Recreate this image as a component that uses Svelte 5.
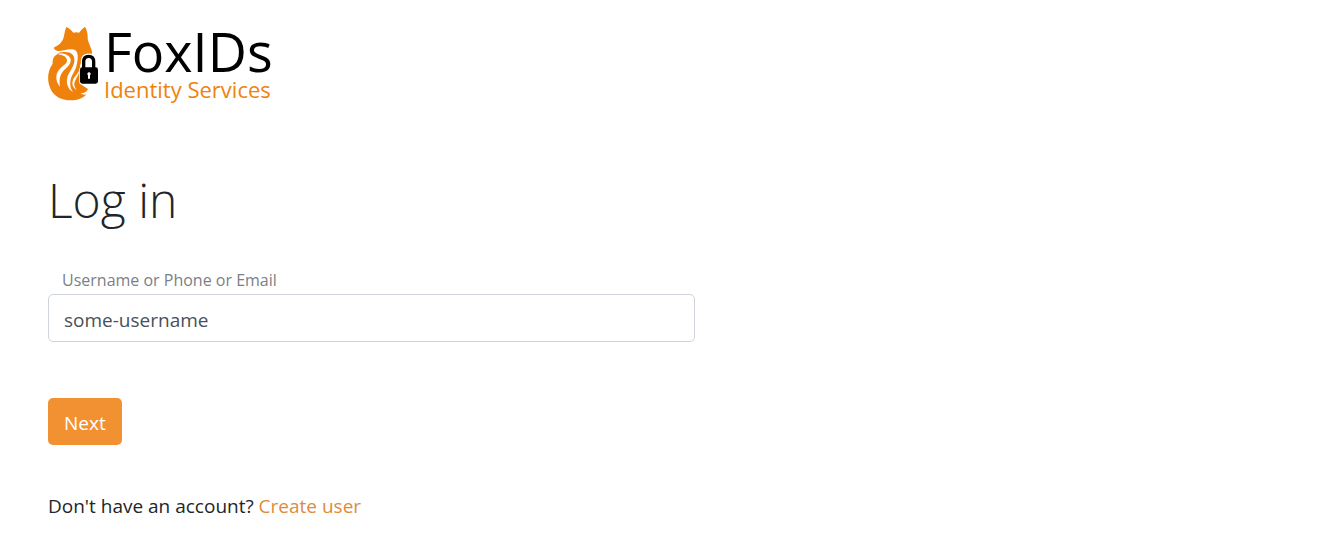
<script>
    let username = $state('some-username');

    function onSubmit(event) {
        event.preventDefault();
    }
</script>

<svelte:head>
    <title>Log in</title>
</svelte:head>

<div class="page">
    <header class="brand">
        <svg class="brand-icon" viewBox="24 18 156 228" aria-hidden="true">
            <!-- Head, chest and tail -->
            <path fill="#ef820d" d="M79 21 C87 25 95 31 100 38 Q109 35 117 38 C122 31 128 25 135 20 C141 30 144 44 143 57 C145 68 152 80 156 94 C158 102 150 108 138 112 L120 136 V191 L144 207 C140 216 132 221 122 219 C127 224 133 225 139 223 C129 235 112 241 94 241 C62 241 38 227 29 200 C20 174 25 148 38 131 C36 118 42 106 54 101 L62 94 C53 94 43 90 41 83 C50 79 59 73 64 66 C74 56 72 36 79 21 Z" />
            <!-- Fur lines -->
            <path fill="#fff" d="M38 93 C62 97 91 82 105 90 C118 99 113 122 110 135 C106 155 93 166 91 185 C90 200 93 208 99 216 C83 207 78 190 82 172 C86 157 101 141 103 125 C105 107 96 99 84 97 C68 94 56 96 38 104 Z" />
            <path fill="#fff" d="M56 101 C73 98 90 106 92 118 C93 130 87 137 77 146 C62 158 56 174 60 200 C47 185 45 164 57 149 C69 136 83 130 81 120 C79 109 68 104 56 104 Z" />
            <path fill="#fff" d="M119 148 C120 162 106 176 103 190 C102 198 105 204 111 210 C97 203 95 191 99 180 C103 169 114 163 119 148 Z" />
            <!-- Padlock -->
            <path fill="none" stroke="#fff" stroke-width="17" d="M131 143 V125 Q131 109 146 109 Q161 109 161 125 V143" />
            <rect x="118" y="140" width="58" height="53" rx="8" fill="#fff" />
            <path fill="none" stroke="#000" stroke-width="10" d="M131 145 V125 Q131 109 146 109 Q161 109 161 125 V145" />
            <rect x="120" y="142" width="54" height="49" rx="7" fill="#000" />
            <path fill="#fff" d="M147 157 a5 5 0 0 1 3 9 v10 h-6 v-10 a5 5 0 0 1 3 -9 Z" />
        </svg>
        <div class="brand-text">
            <span class="brand-name">FoxIDs</span>
            <span class="brand-tagline">Identity Services</span>
        </div>
    </header>

    <main>
        <h1>Log in</h1>
        <form onsubmit={onSubmit}>
            <label for="username">Username or Phone or Email</label>
            <input id="username" type="text" autocomplete="username" bind:value={username} />
            <button type="submit">Next</button>
        </form>
        <p class="signup">Don't have an account? <a href="#create">Create user</a></p>
    </main>
</div>

<style>
:global(body) {
    margin: 0;
    background: #fff;
}

.page {
    padding: 26px 48px 24px;
    font-family: "Segoe UI", "Open Sans", "Noto Sans", sans-serif;
    font-size: 19px;
    line-height: 28px;
    color: #212529;
}

.brand {
    display: flex;
    align-items: flex-start;
    gap: 4px;
}

.brand-icon {
    width: 52px;
    height: 76px;
    flex: none;
}

.brand-text {
    display: flex;
    flex-direction: column;
}

.brand-name {
    font-size: 54px;
    line-height: 50px;
    color: #000;
}

.brand-tagline {
    font-size: 22px;
    line-height: 26px;
    color: #ef820d;
}

h1 {
    margin: 68px 0 36px;
    font-size: 48px;
    font-weight: 300;
    line-height: 60px;
}

form {
    display: flex;
    flex-direction: column;
    align-items: flex-start;
    width: 52%;
}

label {
    padding: 0 14px;
    font-size: 16px;
    line-height: 28px;
    color: #7b8086;
}

input {
    box-sizing: border-box;
    width: 100%;
    height: 48px;
    padding: 4px 15px 0;
    border: 1px solid #ced4da;
    border-radius: 5px;
    background: #fff;
    font: inherit;
    color: #495057;
}

button {
    margin-top: 56px;
    padding: 11px 16px 8px;
    border: 0;
    border-radius: 5px;
    background: #f29132;
    color: #fff;
    font: inherit;
    cursor: pointer;
}

.signup {
    margin: 47px 0 0;
}

a {
    color: #e08a3c;
    text-decoration: none;
}

a:hover {
    text-decoration: underline;
}
</style>
